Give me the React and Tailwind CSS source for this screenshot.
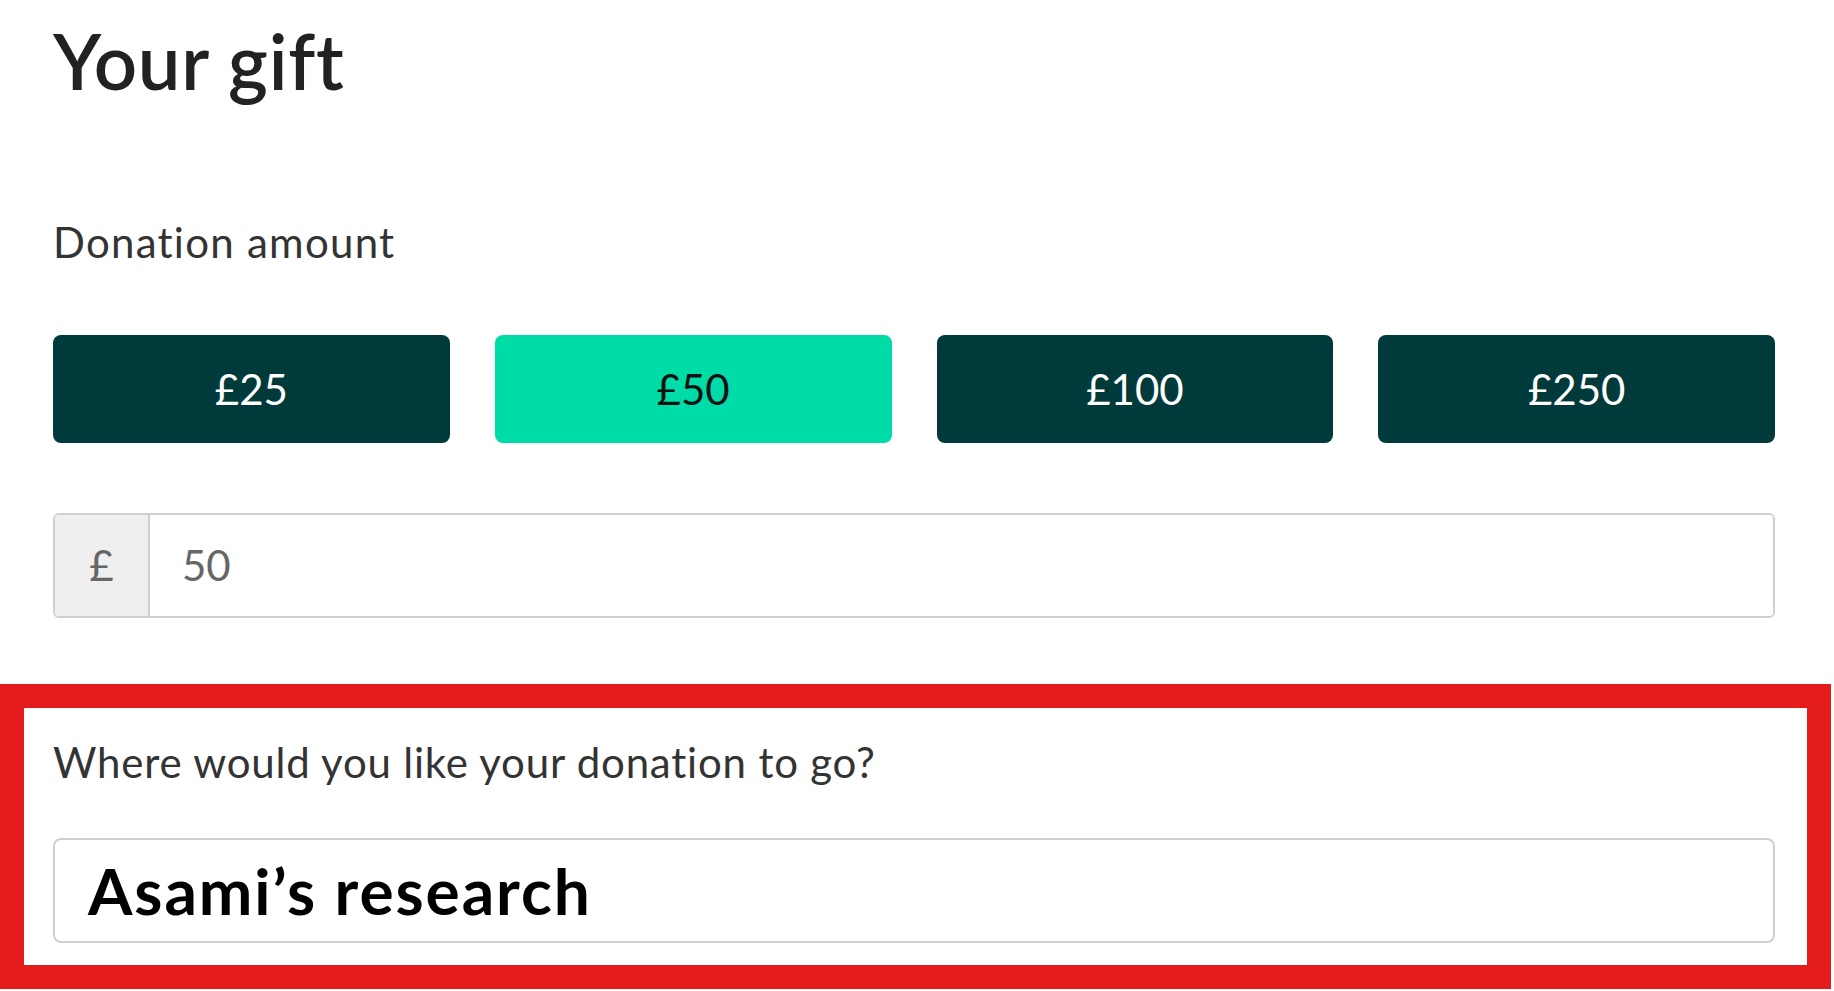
import { useState } from "react";

const amounts = [25, 50, 100, 250];

const App = () => {
  const [amount, setAmount] = useState(50);

  return (
    <div className="min-h-screen w-full bg-white font-['Lato',sans-serif] text-[#222]">
      <div className="pl-[53px] pt-[23px] w-[1775px]">
        <h1 className="text-[76px] leading-none font-semibold tracking-[0.01em] text-[#222]">Your gift</h1>

        <div className="mt-[122px] text-[42px] leading-none tracking-[0.03em] text-[#333]">
          Donation amount
        </div>

        {/* preset amounts */}
        <div className="mt-[72px] grid grid-cols-4 gap-[45px] w-[1722px]">
          {amounts.map((a) => (
            <button
              key={a}
              onClick={() => setAmount(a)}
              className={`h-[108px] rounded-[8px] text-[42px] leading-none ${
                amount === a ? "bg-[#00dca8] text-[#111]" : "bg-[#013a3a] text-white"
              }`}
            >
              £{a}
            </button>
          ))}
        </div>

        {/* custom amount */}
        <div className="mt-[70px] flex h-[105px] w-[1722px] rounded-[6px] border-2 border-[#d0d0d0] overflow-hidden">
          <div className="w-[95px] flex items-center justify-center bg-[#efefef] border-r-2 border-[#d0d0d0] text-[42px] text-[#666]">
            £
          </div>
          <input
            value={amount}
            onChange={(e) => setAmount(e.target.value)}
            className="flex-1 pl-[32px] text-[42px] text-[#666] outline-none bg-white"
          />
        </div>
      </div>

      {/* destination */}
      <div className="mt-[66px] w-[1831px] border-[24px] border-[#e41b1b] pl-[29px] pr-[62px] pt-[33px] pb-[22px]">
        <div className="text-[42px] leading-none tracking-[0.019em] text-[#333]">
          Where would you like your donation to go?
        </div>
        <div className="mt-[55px] h-[105px] w-[1722px] flex items-center rounded-[8px] border-2 border-[#d0d0d0] pl-[33px]">
          <span className="text-[64px] font-bold leading-none tracking-[0.03em] text-black">Asami’s research</span>
        </div>
      </div>
    </div>
  );
};

export default App;
